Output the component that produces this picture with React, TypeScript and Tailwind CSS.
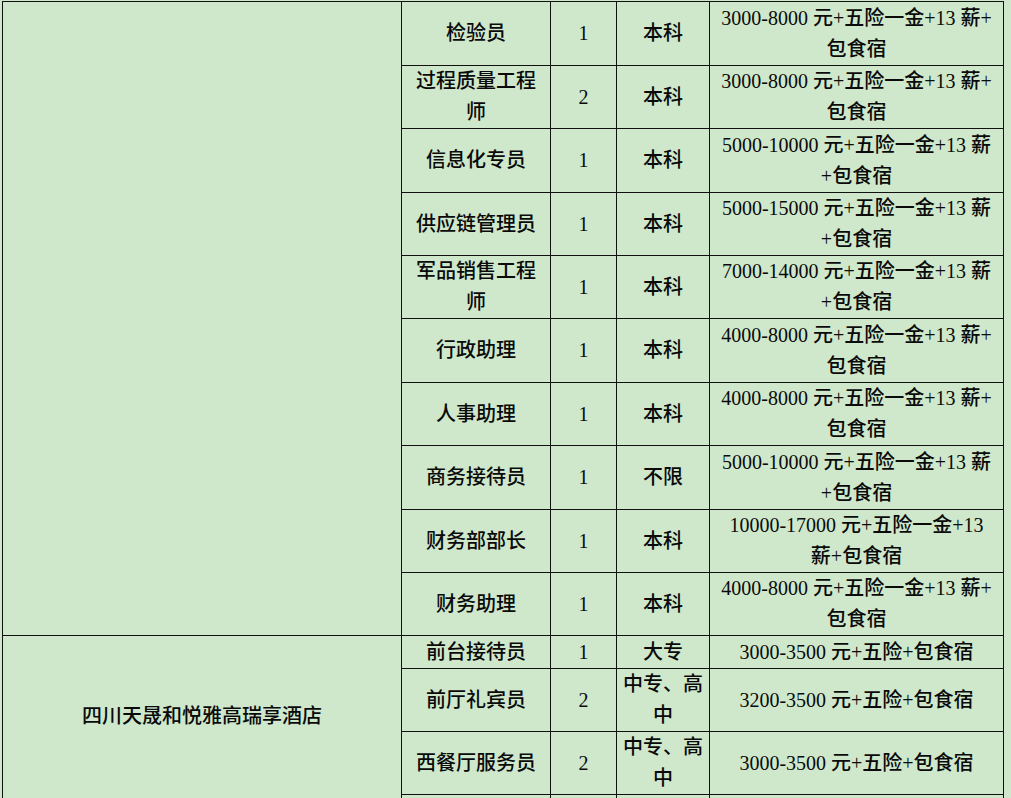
import React from 'react';

type Job = {
  title: string[];
  count: string;
  degree: string[];
  pay: string[];
};

const firstJobs: Job[] = [
  { title: ['检验员'], count: '1', degree: ['本科'], pay: ['3000-8000 元+五险一金+13 薪+', '包食宿'] },
  { title: ['过程质量工程', '师'], count: '2', degree: ['本科'], pay: ['3000-8000 元+五险一金+13 薪+', '包食宿'] },
  { title: ['信息化专员'], count: '1', degree: ['本科'], pay: ['5000-10000 元+五险一金+13 薪', '+包食宿'] },
  { title: ['供应链管理员'], count: '1', degree: ['本科'], pay: ['5000-15000 元+五险一金+13 薪', '+包食宿'] },
  { title: ['军品销售工程', '师'], count: '1', degree: ['本科'], pay: ['7000-14000 元+五险一金+13 薪', '+包食宿'] },
  { title: ['行政助理'], count: '1', degree: ['本科'], pay: ['4000-8000 元+五险一金+13 薪+', '包食宿'] },
  { title: ['人事助理'], count: '1', degree: ['本科'], pay: ['4000-8000 元+五险一金+13 薪+', '包食宿'] },
  { title: ['商务接待员'], count: '1', degree: ['不限'], pay: ['5000-10000 元+五险一金+13 薪', '+包食宿'] },
  { title: ['财务部部长'], count: '1', degree: ['本科'], pay: ['10000-17000 元+五险一金+13', '薪+包食宿'] },
  { title: ['财务助理'], count: '1', degree: ['本科'], pay: ['4000-8000 元+五险一金+13 薪+', '包食宿'] },
];

const hotelJobs: Job[] = [
  { title: ['前台接待员'], count: '1', degree: ['大专'], pay: ['3000-3500 元+五险+包食宿'] },
  { title: ['前厅礼宾员'], count: '2', degree: ['中专、高', '中'], pay: ['3200-3500 元+五险+包食宿'] },
  { title: ['西餐厅服务员'], count: '2', degree: ['中专、高', '中'], pay: ['3000-3500 元+五险+包食宿'] },
];

function Cell({ lines }: { lines: string[] }) {
  return (
    <div className="flex flex-col items-center justify-center bg-[#cfe8cb] text-center leading-[31px]">
      {lines.map((l, i) => (
        <span key={i} className="whitespace-nowrap">{l}</span>
      ))}
    </div>
  );
}

function JobRow({ job }: { job: Job }) {
  return (
    <>
      <Cell lines={job.title} />
      <Cell lines={[job.count]} />
      <Cell lines={job.degree} />
      <Cell lines={job.pay} />
    </>
  );
}

export default function App() {
  return (
    <div className="h-[798px] w-full overflow-hidden bg-[#cfe8cb]">
      <div
        className="ml-[2px] mt-[1px] grid w-[1002px] gap-[1px] bg-[#111] p-[1px] text-[20px] font-medium text-[#0a0a0a]"
        style={{ fontFamily: '"Liberation Serif", "Noto Sans CJK SC", serif' }}
      >
        <div className="grid grid-cols-[398px_148px_65px_92px_293px] grid-rows-[63px_62px_63px_62px_62px_63px_62px_63px_62px_62px_32px_62px_62px_62px] gap-[1px]">
          {/* 第一家公司（名称在上方） */}
          <div className="row-span-10 bg-[#cfe8cb]" />
          {firstJobs.map((job, i) => (
            <JobRow key={i} job={job} />
          ))}

          {/* 酒店 */}
          <div className="row-span-4 flex justify-center bg-[#cfe8cb] pt-[68px] leading-[24px]">
            <span>四川天晟和悦雅高瑞享酒店</span>
          </div>
          {hotelJobs.map((job, i) => (
            <JobRow key={i} job={job} />
          ))}
          <div className="bg-[#cfe8cb]" />
          <div className="bg-[#cfe8cb]" />
          <div className="bg-[#cfe8cb]" />
          <div className="bg-[#cfe8cb]" />
        </div>
      </div>
    </div>
  );
}
